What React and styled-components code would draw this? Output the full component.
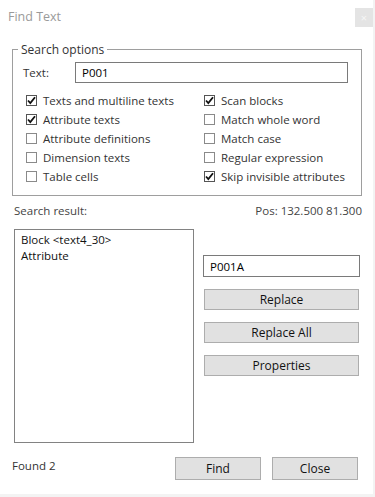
import React from 'react';
import styled, { createGlobalStyle } from 'styled-components';

const GlobalStyle = createGlobalStyle`
  html, body {
    margin: 0;
    padding: 0;
    background: #f3f3f3;
  }
  body {
    font-family: "Segoe UI", "Open Sans", "Noto Sans", sans-serif;
    font-size: 11.5px;
    color: #333;
  }
`;

const Dialog = styled.div`
  width: 373px;
  height: 494px;
  background: #fff;
  box-sizing: border-box;
  display: flex;
  flex-direction: column;
`;

const TitleBar = styled.div`
  height: 41px;
  display: flex;
  align-items: flex-start;
  justify-content: space-between;
`;

const Title = styled.div`
  padding: 8px 0 0 8px;
  font-size: 12.5px;
  color: #9a9a9a;
`;

const CloseButton = styled.div`
  margin-top: 8px;
  width: 18px;
  height: 19px;
  background: #e4e4e4;
  color: #f6f6f6;
  font-size: 11px;
  line-height: 19px;
  text-align: center;
`;

const GroupBox = styled.fieldset`
  margin: 0 11px 0 12px;
  padding: 4px 13px 9px 10px;
  border: 1px solid #9e9e9e;
  min-width: 0;
`;

const Legend = styled.legend`
  margin-left: -5px;
  padding: 0 3px;
  font-size: 12px;
  color: #333;
`;

const TextRow = styled.div`
  display: flex;
  align-items: center;
  height: 21px;
`;

const Label = styled.span`
  width: 52px;
  color: #333;
`;

const TextInput = styled.div`
  flex: 1;
  height: 21px;
  box-sizing: border-box;
  border: 1px solid #7a7a7a;
  padding: 0 6px;
  display: flex;
  align-items: center;
  color: #000;
`;

const OptionsGrid = styled.div`
  margin-top: 8px;
  padding-left: 3px;
  display: grid;
  grid-template-columns: 178px 1fr;
  grid-auto-flow: column;
  grid-template-rows: repeat(5, 19px);
`;

const Option = styled.label`
  display: flex;
  align-items: center;
  gap: 6px;
  white-space: nowrap;
`;

const Box = styled.span`
  width: 11px;
  height: 11px;
  box-sizing: border-box;
  border: 1px solid ${p => (p.$checked ? '#555' : '#8a8a8a')};
  background: #fff;
  display: flex;
  align-items: center;
  justify-content: center;
`;

const ResultHeader = styled.div`
  margin: 7px 11px 0 14px;
  display: flex;
  justify-content: space-between;
  color: #444;
`;

const Body = styled.div`
  margin: 11px 13px 0 14px;
  display: flex;
  gap: 9px;
`;

const ResultList = styled.div`
  width: 180px;
  height: 214px;
  box-sizing: border-box;
  border: 1px solid #828282;
  padding: 2px 6px;
  color: #111;
  line-height: 16px;
`;

const SideColumn = styled.div`
  flex: 1;
  padding-top: 26px;
  display: flex;
  flex-direction: column;
  gap: 12px;
`;

const ReplaceInput = styled(TextInput)`
  flex: none;
  height: 22px;
`;

const Button = styled.div`
  height: 21px;
  margin: 0 1px;
  box-sizing: border-box;
  background: #e1e1e1;
  border: 1px solid #adadad;
  display: flex;
  align-items: center;
  justify-content: center;
  color: #111;
  font-size: 12px;
`;

const Footer = styled.div`
  margin: 14px 15px 0 12px;
  display: flex;
  align-items: flex-start;
  gap: 11px;
`;

const Status = styled.div`
  flex: 1;
  margin-top: 1px;
  color: #333;
`;

const FooterButton = styled(Button)`
  width: 86px;
  height: 23px;
  margin: 0;
`;

const Check = () => (
  <svg width="9" height="9" viewBox="0 0 9 9">
    <polyline points="1,4.5 3.3,7 8,1.2" fill="none" stroke="#111" strokeWidth="1.8" />
  </svg>
);

const options = [
  ['Texts and multiline texts', true],
  ['Attribute texts', true],
  ['Attribute definitions', false],
  ['Dimension texts', false],
  ['Table cells', false],
  ['Scan blocks', true],
  ['Match whole word', false],
  ['Match case', false],
  ['Regular expression', false],
  ['Skip invisible attributes', true],
];

const App = () => (
  <>
    <GlobalStyle />
    <Dialog>
      <TitleBar>
        <Title>Find Text</Title>
        <CloseButton>×</CloseButton>
      </TitleBar>

      <GroupBox>
        <Legend>Search options</Legend>
        <TextRow>
          <Label>Text:</Label>
          <TextInput>P001</TextInput>
        </TextRow>
        <OptionsGrid>
          {options.map(([text, checked]) => (
            <Option key={text}>
              <Box $checked={checked}>{checked && <Check />}</Box>
              {text}
            </Option>
          ))}
        </OptionsGrid>
      </GroupBox>

      <ResultHeader>
        <span>Search result:</span>
        <span>Pos: 132.500 81.300</span>
      </ResultHeader>

      <Body>
        <ResultList>
          <div>Block &lt;text4_30&gt;</div>
          <div>Attribute</div>
        </ResultList>
        <SideColumn>
          <ReplaceInput>P001A</ReplaceInput>
          <Button>Replace</Button>
          <Button>Replace All</Button>
          <Button>Properties</Button>
        </SideColumn>
      </Body>

      <Footer>
        <Status>Found 2</Status>
        <FooterButton>Find</FooterButton>
        <FooterButton>Close</FooterButton>
      </Footer>
    </Dialog>
  </>
);

export default App;
